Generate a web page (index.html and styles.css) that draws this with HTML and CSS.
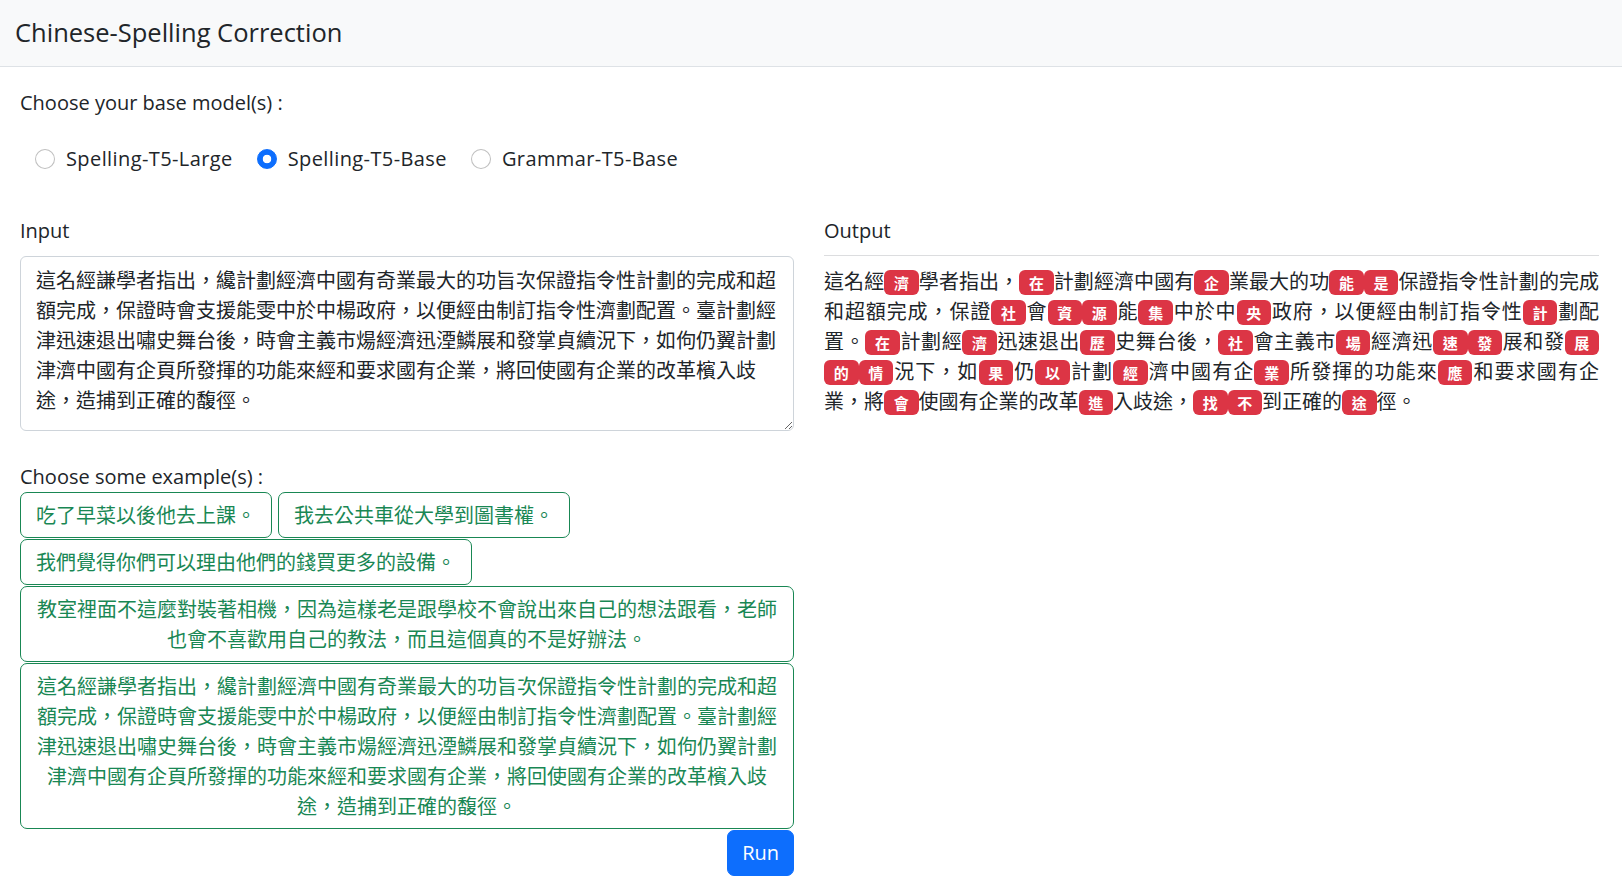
FILE: index.html
```html
<!DOCTYPE html>
<html lang="zh-Hant">
<head>
<meta charset="utf-8">
<title>Chinese-Spelling Correction</title>
<link rel="stylesheet" href="styles.css">
</head>
<body>
<header class="topbar"><span class="brand">Chinese-Spelling Correction</span></header>
<main class="page">
  <p class="prompt">Choose your base model(s) :</p>
  <div class="models">
    <label class="model"><input class="radio" type="radio" name="model"><span>Spelling-T5-Large</span></label>
    <label class="model"><input class="radio" type="radio" name="model" checked><span>Spelling-T5-Base</span></label>
    <label class="model"><input class="radio" type="radio" name="model"><span>Grammar-T5-Base</span></label>
  </div>
  <div class="cols">
    <section class="col">
      <div class="label">Input</div>
      <textarea class="input zh">這名經謙學者指出，纔計劃經濟中國有奇業最大的功旨次保證指令性計劃的完成和超額完成，保證時會支援能雯中於中楊政府，以便經由制訂指令性濟劃配置。臺計劃經津迅速退出嘯史舞台後，時會主義市煬經濟迅湮鱗展和發掌貞續況下，如佝仍翼計劃津濟中國有企頁所發揮的功能來經和要求國有企業，將回使國有企業的改革檳入歧途，造捕到正確的馥徑。</textarea>
      <div class="label examples-label">Choose some example(s) :</div>
      <div class="examples zh">
        <button class="example">吃了早菜以後他去上課。</button>
        <button class="example">我去公共車從大學到圖書權。</button>
        <button class="example">我們覺得你們可以理由他們的錢買更多的設備。</button>
        <button class="example">教室裡面不這麼對裝著相機，因為這樣老是跟學校不會說出來自己的想法跟看，老師也會不喜歡用自己的教法，而且這個真的不是好辦法。</button>
        <button class="example">這名經謙學者指出，纔計劃經濟中國有奇業最大的功旨次保證指令性計劃的完成和超額完成，保證時會支援能雯中於中楊政府，以便經由制訂指令性濟劃配置。臺計劃經津迅速退出嘯史舞台後，時會主義市煬經濟迅湮鱗展和發掌貞續況下，如佝仍翼計劃津濟中國有企頁所發揮的功能來經和要求國有企業，將回使國有企業的改革檳入歧途，造捕到正確的馥徑。</button>
      </div>
      <div class="run-row"><button class="run">Run</button></div>
    </section>
    <section class="col">
      <div class="label">Output</div>
      <hr class="rule">
      <div class="output zh">這名經<span class="fix">濟</span>學者指出，<span class="fix">在</span>計劃經濟中國有<span class="fix">企</span>業最大的功<span class="fix">能</span><span class="fix">是</span>保證指令性計劃的完成和超額完成，保證<span class="fix">社</span>會<span class="fix">資</span><span class="fix">源</span>能<span class="fix">集</span>中於中<span class="fix">央</span>政府，以便經由制訂指令性<span class="fix">計</span>劃配置。<span class="fix">在</span>計劃經<span class="fix">濟</span>迅速退出<span class="fix">歷</span>史舞台後，<span class="fix">社</span>會主義市<span class="fix">場</span>經濟迅<span class="fix">速</span><span class="fix">發</span>展和發<span class="fix">展</span><span class="fix">的</span><span class="fix">情</span>況下，如<span class="fix">果</span>仍<span class="fix">以</span>計劃<span class="fix">經</span>濟中國有企<span class="fix">業</span>所發揮的功能來<span class="fix">應</span>和要求國有企業，將<span class="fix">會</span>使國有企業的改革<span class="fix">進</span>入歧途，<span class="fix">找</span><span class="fix">不</span>到正確的<span class="fix">途</span>徑。</div>
    </section>
  </div>
</main>
</body>
</html>
```

FILE: styles.css
```css
* { box-sizing: border-box; }
html, body { margin: 0; padding: 0; }
body {
  font-family: "Open Sans", "Noto Sans CJK TC", sans-serif;
  font-size: 20px;
  line-height: 1.5;
  color: #212529;
  background: #fff;
}
.zh { font-family: "Noto Sans CJK TC", "Noto Sans", sans-serif; }

.topbar {
  height: 67px;
  background: #f8f9fa;
  border-bottom: 1px solid #dee2e6;
  display: flex;
  align-items: center;
  padding: 0 0 2px 15px;
}
.brand { font-size: 25.5px; line-height: 1.5; color: #212529; }

.page { padding: 0 23px 0 20px; }
.prompt { margin: 21px 0 0; height: 30px; }
.models {
  display: flex;
  align-items: center;
  gap: 24px;
  padding-left: 15px;
  margin-top: 26px;
  height: 30px;
}
.model { display: inline-flex; align-items: center; gap: 11px; cursor: pointer; letter-spacing: 0.4px; }
.radio {
  appearance: none;
  -webkit-appearance: none;
  width: 20px; height: 20px;
  margin: 0;
  border: 1px solid rgba(0,0,0,.25);
  border-radius: 50%;
  background: #fff;
}
.radio:checked {
  border-color: #0d6efd;
  background: radial-gradient(circle, #fff 0 4px, #0d6efd 4.6px);
}

.cols {
  display: grid;
  grid-template-columns: 774px 1fr;
  column-gap: 30px;
  margin-top: 42px;
}
.label { height: 30px; }
.input {
  display: block;
  width: 100%;
  height: 175px;
  margin-top: 10px;
  padding: 7.5px 15px;
  font-size: 20px;
  line-height: 1.5;
  color: #212529;
  border: 1px solid #ced4da;
  border-radius: 6px;
  resize: vertical;
}
.examples-label { margin-top: 31px; }
.examples {
  display: flex;
  flex-wrap: wrap;
  column-gap: 6px;
  row-gap: 1px;
}
.example {
  font-family: inherit;
  font-size: 20px;
  line-height: 1.5;
  color: #198754;
  background: transparent;
  border: 1px solid #198754;
  border-radius: 7px;
  padding: 7px 15px;
  text-align: center;
  cursor: pointer;
}
.run-row { display: flex; justify-content: flex-end; margin-top: 1px; }
.run {
  font-family: "Open Sans", sans-serif;
  font-size: 20px;
  line-height: 1.5;
  color: #fff;
  background: #0d6efd;
  border: 1px solid #0d6efd;
  border-radius: 7px;
  padding: 7px 14px;
  cursor: pointer;
}

.rule {
  margin: 9px 0 10px;
  border: 0;
  border-top: 1px solid #dcdddf;
}
.output { text-align: justify; }
.fix {
  display: inline-block;
  padding: .35em .65em;
  font-size: .75em;
  font-weight: 700;
  line-height: 1;
  color: #fff;
  background: #dc3545;
  border-radius: 6px;
  vertical-align: baseline;
  white-space: nowrap;
}
```
